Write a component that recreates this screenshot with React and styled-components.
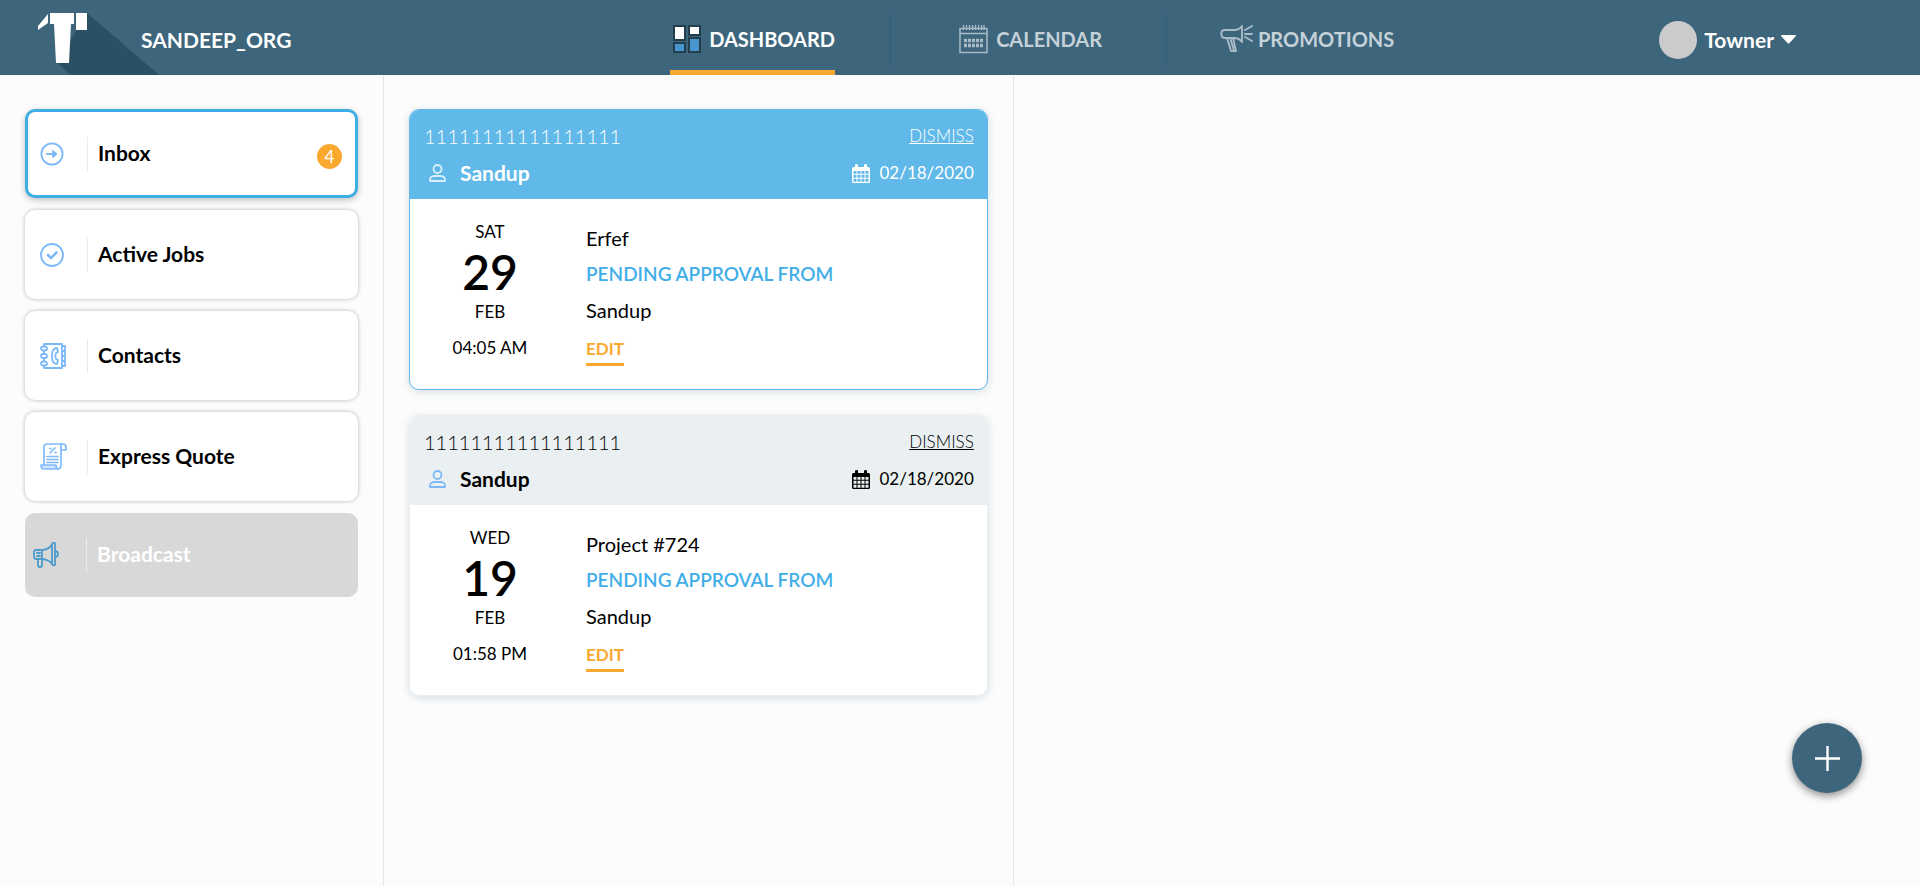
import React from "react";
import styled, { createGlobalStyle, css } from "styled-components";

const navy = "#3d657b";
const orange = "#faa92f";
const sky = "#42aee8";
const iconBlue = "#7db9f8";

const GlobalStyle = createGlobalStyle`
  *, *::before, *::after { box-sizing: border-box; }
  body {
    margin: 0;
    background: #fff;
    color: #000;
    font-family: Lato, "Liberation Sans", sans-serif;
    font-size: 17px;
    line-height: 24px;
  }
  button { font: inherit; color: inherit; background: none; border: 0; padding: 0; cursor: pointer; }
  a { color: inherit; }
  svg { display: block; flex: none; }
`;

const Page = styled.div`
  display: flex;
  flex-direction: column;
  min-height: calc(100vh - 2px);
  background: #fcfcfc;
`;

const Header = styled.header`
  display: grid;
  grid-template-columns: 32% 43.2% 1fr;
  height: 75px;
  background: ${navy};
  color: #fff;
  font-size: 20px;
  font-weight: 700;
`;

const Brand = styled.div`
  display: flex;
  align-items: center;
  font-size: 21px;
`;

const LogoLink = styled.a`
  width: 141px;
  height: 75px;
`;

const LogoSvg = styled.svg`
  overflow: visible;
`;

const OrgName = styled.span`
  padding-top: 4px;
`;

const Tabs = styled.nav`
  display: grid;
  grid-template-columns: repeat(3, 1fr);
`;

const TabCell = styled.div`
  display: flex;
  justify-content: center;
  background: ${(p) => (p.$last ? "none" : "linear-gradient(#2f5f7a, #2f5f7a) right 13px / 1px 55px no-repeat")};
`;

const Tab = styled.a`
  display: flex;
  align-items: center;
  gap: ${(p) => (p.$tight ? "5px" : "8px")};
  height: 75px;
  padding: 8px 0 0 3px;
  border-bottom: 5px solid ${(p) => (p.$active ? orange : "transparent")};
  color: ${(p) => (p.$active ? "#fff" : "#c5d1d8")};
  text-decoration: none;
  white-space: nowrap;
`;

const Account = styled.div`
  display: flex;
  align-items: center;
  justify-content: flex-end;
  padding: 4px 124px 0 0;
`;

const AccountButton = styled.button`
  display: flex;
  align-items: center;
  gap: 7px;
  font-size: 21px;
  font-weight: 700;
`;

const Avatar = styled.span`
  width: 38px;
  height: 38px;
  border-radius: 50%;
  background: #cbcbcb;
`;

const Columns = styled.div`
  display: flex;
  flex: 1;
`;

const Sidebar = styled.aside`
  display: flex;
  flex-direction: column;
  gap: 12px;
  width: 20%;
  padding: 34px 25px;
  border-right: 1px solid #e4e6e8;
`;

const MenuButton = styled.button`
  display: flex;
  align-items: center;
  width: 100%;
  height: 89px;
  padding: 0 13px 0 12px;
  border: 3px solid transparent;
  border-radius: 10px;
  background: #fff;
  box-shadow: 0 0 4px rgba(0, 0, 0, 0.28);
  font-size: 21px;
  font-weight: 700;
  text-align: left;
  ${(p) =>
    p.$active &&
    css`
      border-color: #3eaee5;
      box-shadow: 0 2px 6px rgba(0, 0, 0, 0.25);
    `}
  ${(p) =>
    p.disabled &&
    css`
      height: 84px;
      padding: 0 13px 0 5px;
      background: #d8d8d8;
      border-color: #d8d8d8;
      box-shadow: none;
      color: #fff;
      cursor: default;
    `}
`;

const MenuIcon = styled.span`
  width: ${(p) => (p.$wide ? "53px" : "47px")};
`;

const MenuLabel = styled.span`
  flex: 1;
  padding: 4px 0 6px 10px;
  border-left: 1px solid #e9ebed;
`;

const Badge = styled.span`
  width: 25px;
  height: 25px;
  margin-top: 6px;
  border-radius: 50%;
  background: ${orange};
  color: #fff;
  font-size: 17px;
  font-weight: 400;
  line-height: 25px;
  text-align: center;
`;

const Feed = styled.main`
  display: flex;
  flex-direction: column;
  gap: 25px;
  width: 32.8%;
  padding: 34px 25px;
  border-right: 1px solid #e4e6e8;
`;

const Card = styled.article`
  border: 1px solid ${(p) => (p.$unread ? "#60b9e8" : "#eaf0f1")};
  border-radius: 10px;
  background: #fff;
  box-shadow: 0 2px 8px rgba(61, 101, 123, 0.2);
  overflow: hidden;
`;

const CardHeader = styled.header`
  display: flex;
  flex-direction: column;
  gap: 13px;
  height: 89px;
  padding: 14px 13px 0 14px;
  background: ${(p) => (p.$unread ? "#60b9e8" : "#eaf0f1")};
  color: ${(p) => (p.$unread ? "#fff" : "#000")};
`;

const HeaderRow = styled.div`
  display: flex;
  align-items: center;
  justify-content: space-between;
`;

const Title = styled.span`
  font-size: 20px;
  font-weight: 300;
`;

const Dismiss = styled.button`
  font-weight: 300;
  text-decoration: underline;
`;

const Person = styled.span`
  display: flex;
  align-items: center;
  gap: 14px;
  padding-left: 5px;
  font-size: 21px;
  font-weight: 700;
`;

const Posted = styled.span`
  display: flex;
  align-items: center;
  gap: 10px;
`;

const CardBody = styled.div`
  display: flex;
  gap: 16px;
  height: 190px;
`;

const DateBlock = styled.div`
  display: flex;
  flex-direction: column;
  align-items: center;
  width: 160px;
  padding-top: 21px;
`;

const DayNumber = styled.strong`
  margin: 5px 0;
  font-size: 48px;
  font-weight: 600;
  line-height: 46px;
`;

const Time = styled.span`
  margin-top: 12px;
`;

const Details = styled.div`
  display: flex;
  flex-direction: column;
  align-items: flex-start;
  gap: 12px;
  padding-top: 27px;
`;

const Status = styled.strong`
  color: ${sky};
  font-size: 19px;
  font-weight: 600;
`;

const Detail = styled.span`
  font-size: 20px;
`;

const Edit = styled.button`
  height: 32px;
  border-bottom: 3px solid ${orange};
  color: ${orange};
  font-weight: 700;
`;

const AddButton = styled.button`
  position: fixed;
  right: 58px;
  bottom: 95px;
  display: grid;
  place-items: center;
  width: 70px;
  height: 70px;
  border-radius: 50%;
  background: ${navy};
  box-shadow: 0 3px 8px rgba(0, 0, 0, 0.45);
`;

const Logo = () => (
  <LogoSvg width="141" height="75" viewBox="0 0 141 75" aria-hidden="true">
    <path d="M87 13 159 75H70L57 62Z" fill="#2a5063" />
    <g fill="#fff">
      <path d="M38 26 48 14v9l-10 7Z" />
      <path d="M50 13h24v11h-3l-2 39H56l-2-39h-4Z" />
      <path d="M76 13h11v17H76Z" />
    </g>
  </LogoSvg>
);

const DashboardIcon = () => (
  <svg width="28" height="28" viewBox="0 0 28 28" stroke="#233f4e" strokeWidth="2">
    <path d="M1 1h11v14H1zM16 1h11v9H16z" fill="#fff" />
    <path d="M1 18h11v9H1zM16 13h11v14H16z" fill="#4796d0" />
  </svg>
);

const CalendarIcon = () => (
  <svg width="29" height="29" viewBox="0 0 29 29" fill="none" stroke="#a9bbc6">
    <path d="M1 3.500h27v24H1zM1 8.500h27" strokeWidth="1.500" />
    <path d="M4.500 0v5M7.500 0v5M10.500 0v5M13.500 0v5M16.500 0v5M19.500 0v5M22.500 0v5M25 0v5" strokeWidth="1.300" />
    <path d="M5 15.500h19M5 20.500h19" strokeWidth="3.500" strokeDasharray="3 1" />
  </svg>
);

const MegaphoneIcon = () => (
  <svg width="33" height="28" viewBox="0 0 33 28" fill="none" stroke="#a9bbc6" strokeWidth="1.900" strokeLinejoin="round" strokeLinecap="round">
    <path d="M22 1c-2 3-5 4-8 4H5C0 5 0 13 5 13h9c3 0 6 1 8 4ZM2 11q0 2 3 2M7 13l4 13h5l-3-13M10.500 14l3 10" />
    <path d="M25 5l7-4M25 9h7M25 12l7 4" />
  </svg>
);

const Caret = () => (
  <svg width="15" height="9" viewBox="0 0 15 9" fill="#fff">
    <path d="M1 0h13q1.500 0 .5 1.500L8.500 8q-1 1-2 0L.5 1.500Q-.5 0 1 0Z" />
  </svg>
);

const lineIcon = { fill: "none", stroke: iconBlue, strokeWidth: 1.8, strokeLinecap: "round", strokeLinejoin: "round" };

const InboxIcon = () => (
  <svg width="24" height="24" viewBox="0 0 24 24" {...lineIcon}>
    <circle cx="12" cy="12" r="10.600" />
    <path d="M7 12h9" strokeWidth="2.200" />
    <path d="M13 8.500 17 12l-4 3.500Z" fill={iconBlue} strokeWidth="1" />
  </svg>
);

const CheckIcon = () => (
  <svg width="24" height="24" viewBox="0 0 24 24" {...lineIcon}>
    <circle cx="12" cy="12" r="11" />
    <path d="M8 12l3 3 5.500-5.500" strokeWidth="2.500" />
  </svg>
);

const ContactsIcon = () => (
  <svg width="26" height="26" viewBox="0 0 26 26" {...lineIcon}>
    <path d="M4 3.500V1h18v24H4v-2.500M4 8v2M4 16v2M22 3h3v20h-3M22 8h3M22 13h3M22 18h3" />
    <rect x="1" y="3.500" width="6" height="4" rx="2" />
    <rect x="1" y="11" width="6" height="4" rx="2" />
    <rect x="1" y="18.500" width="6" height="4" rx="2" />
    <path d="M17 5c-3 0-5 3-5 8s2 8 5 8l1-4-2-1c-1-2-1-4 0-6l2-1Z" />
  </svg>
);

const QuoteIcon = () => (
  <svg width="27" height="27" viewBox="0 0 27 27" {...lineIcon} strokeWidth="1.700">
    <path d="M4 22V4q0-3 3-3h16q3 0 3 3v3h-5v15q0 4-4 4M21 7V4q0-3 2-3" />
    <path d="M1 22h15q0 4 2 4H4q-3 0-3-4Z" fill="#cfe4fd" />
    <path d="M10 10l5-5M10 5.500h1M15 9.500h1M7 13.500h11M7 16.500h11M7 19.500h11" />
  </svg>
);

const BroadcastIcon = () => (
  <svg width="26" height="26" viewBox="0 0 26 26" {...lineIcon} stroke="#4f9bcb">
    <path d="M9 8H3Q1 8 1 10v4q0 3 2 3h6ZM9 8c5 0 9-3 10-6q1-2 3-1v22q-2 1-3-1c-1-2-5-5-10-5M19 2v20M22 9q3 0 3 3t-3 3M5 17v6q0 2 2 2t2-2v-6M4 11h3M4 14h3" />
  </svg>
);

const PersonIcon = ({ color }) => (
  <svg width="17" height="18" viewBox="0 0 17 18" fill="none" stroke={color} strokeWidth="1.800">
    <circle cx="8.500" cy="5" r="4" />
    <path d="M1 17q-.5-5 4.500-5h6q5 0 4.500 5Z" strokeLinejoin="round" />
  </svg>
);

const DateIcon = () => (
  <svg width="18" height="19" viewBox="0 0 18 19">
    <path
      fill="currentColor"
      fillRule="evenodd"
      d="M3 3V1q0-1 1.500-1T6 1v2h6V1q0-1 1.500-1T15 1v2h1.500Q18 3 18 4.500v13q0 1.500-1.500 1.500h-15Q0 19 0 17.500v-13Q0 3 1.500 3ZM1.500 7v2.700h3V7Zm4 0v2.700h3V7Zm4 0v2.700h3V7Zm4 0v2.700h3V7Zm-12 3.700v3h3v-3Zm4 0v3h3v-3Zm4 0v3h3v-3Zm4 0v3h3v-3Zm-12 4v3h3v-3Zm4 0v3h3v-3Zm4 0v3h3v-3Zm4 0v3h3v-3Z"
    />
  </svg>
);

const menu = [
  { label: "Inbox", icon: InboxIcon, active: true, count: 4 },
  { label: "Active Jobs", icon: CheckIcon },
  { label: "Contacts", icon: ContactsIcon },
  { label: "Express Quote", icon: QuoteIcon },
  { label: "Broadcast", icon: BroadcastIcon, disabled: true },
];

const tabs = [
  { label: "DASHBOARD", icon: DashboardIcon, active: true },
  { label: "CALENDAR", icon: CalendarIcon },
  { label: "PROMOTIONS", icon: MegaphoneIcon, tight: true },
];

const jobs = [
  { unread: true, weekday: "SAT", day: "29", month: "FEB", time: "04:05 AM", project: "Erfef" },
  { unread: false, weekday: "WED", day: "19", month: "FEB", time: "01:58 PM", project: "Project #724" },
];

const JobCard = ({ job }) => (
  <Card $unread={job.unread}>
    <CardHeader $unread={job.unread}>
      <HeaderRow>
        <Title>11111111111111111</Title>
        <Dismiss type="button">DISMISS</Dismiss>
      </HeaderRow>
      <HeaderRow>
        <Person>
          <PersonIcon color={job.unread ? "#d9effb" : iconBlue} />
          Sandup
        </Person>
        <Posted>
          <DateIcon />
          <time dateTime="2020-02-18">02/18/2020</time>
        </Posted>
      </HeaderRow>
    </CardHeader>
    <CardBody>
      <DateBlock>
        <span>{job.weekday}</span>
        <DayNumber>{job.day}</DayNumber>
        <span>{job.month}</span>
        <Time>{job.time}</Time>
      </DateBlock>
      <Details>
        <Detail>{job.project}</Detail>
        <Status>PENDING APPROVAL FROM</Status>
        <Detail>Sandup</Detail>
        <Edit type="button">EDIT</Edit>
      </Details>
    </CardBody>
  </Card>
);

export default function App() {
  return (
    <>
      <GlobalStyle />
      <Page>
        <Header>
          <Brand>
            <LogoLink href="#home" aria-label="Home">
              <Logo />
            </LogoLink>
            <OrgName>SANDEEP_ORG</OrgName>
          </Brand>
          <Tabs>
            {tabs.map(({ label, icon: Icon, active, tight }, i) => (
              <TabCell key={label} $last={i === tabs.length - 1}>
                <Tab href={`#${label.toLowerCase()}`} $active={active} $tight={tight}>
                  <Icon />
                  {label}
                </Tab>
              </TabCell>
            ))}
          </Tabs>
          <Account>
            <AccountButton type="button">
              <Avatar />
              Towner
              <Caret />
            </AccountButton>
          </Account>
        </Header>
        <Columns>
          <Sidebar>
            {menu.map(({ label, icon: Icon, active, count, disabled }) => (
              <MenuButton key={label} type="button" $active={active} disabled={disabled}>
                <MenuIcon $wide={disabled}>
                  <Icon />
                </MenuIcon>
                <MenuLabel>{label}</MenuLabel>
                {count && <Badge>{count}</Badge>}
              </MenuButton>
            ))}
          </Sidebar>
          <Feed>
            {jobs.map((job) => (
              <JobCard key={job.weekday} job={job} />
            ))}
          </Feed>
        </Columns>
        <AddButton type="button" aria-label="Add">
          <svg width="25" height="25" viewBox="0 0 25 25" stroke="#fff" strokeWidth="2.400">
            <path d="M12.500 0v25M0 12.500h25" />
          </svg>
        </AddButton>
      </Page>
    </>
  );
}
